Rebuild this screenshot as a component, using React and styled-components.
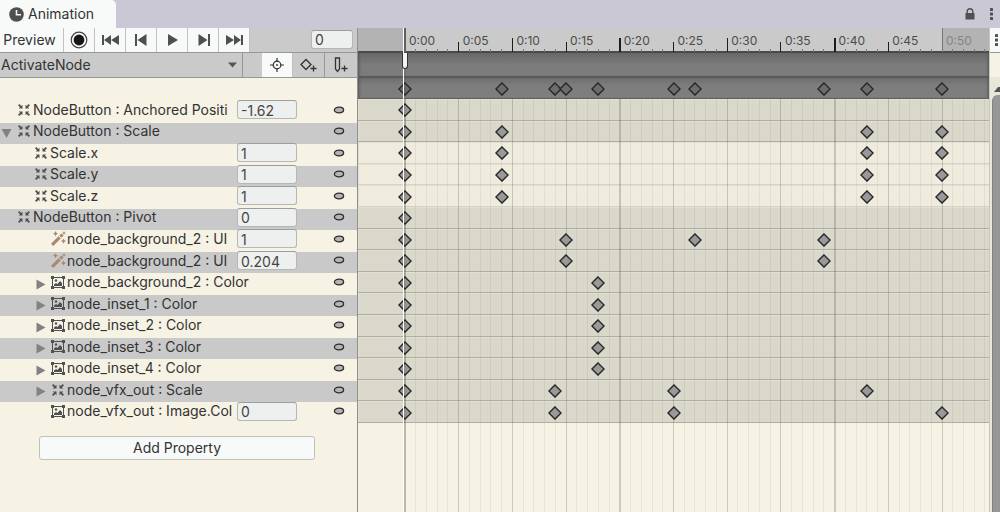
import styled, { createGlobalStyle, css } from "styled-components";

const LAST_FRAME = 50;

const rows = [
  { name: "NodeButton : Anchored Positi", icon: "rect", level: 0, value: "-1.62", keys: [0] },
  { name: "NodeButton : Scale", icon: "rect", level: 0, fold: "open", keys: [0, 9, 43, 50] },
  { name: "Scale.x", icon: "rect", level: 1, value: "1", keys: [0, 9, 43, 50] },
  { name: "Scale.y", icon: "rect", level: 1, value: "1", keys: [0, 9, 43, 50] },
  { name: "Scale.z", icon: "rect", level: 1, value: "1", keys: [0, 9, 43, 50] },
  { name: "NodeButton : Pivot", icon: "rect", level: 0, value: "0", keys: [0] },
  { name: "node_background_2 : UI", icon: "wand", level: 2, value: "1", keys: [0, 15, 27, 39] },
  { name: "node_background_2 : UI", icon: "wand", level: 2, value: "0.204", keys: [0, 15, 39] },
  { name: "node_background_2 : Color", icon: "image", level: 2, fold: "closed", keys: [0, 18] },
  { name: "node_inset_1 : Color", icon: "image", level: 2, fold: "closed", keys: [0, 18] },
  { name: "node_inset_2 : Color", icon: "image", level: 2, fold: "closed", keys: [0, 18] },
  { name: "node_inset_3 : Color", icon: "image", level: 2, fold: "closed", keys: [0, 18] },
  { name: "node_inset_4 : Color", icon: "image", level: 2, fold: "closed", keys: [0, 18] },
  { name: "node_vfx_out : Scale", icon: "rect", level: 2, fold: "closed", keys: [0, 14, 25, 43] },
  { name: "node_vfx_out : Image.Col", icon: "image", level: 2, value: "0", keys: [0, 14, 25, 50] },
];

const summaryKeys = [0, 9, 14, 15, 18, 25, 27, 39, 43, 50];
const ticks = Array.from({ length: 55 }, (_, i) => i);
const toPercent = (frame) => `${(frame / LAST_FRAME) * 100}%`;

const GlobalStyle = createGlobalStyle`
  * {
    box-sizing: border-box;
  }
  body {
    margin: 0;
    background: #f6f2e4;
    color: #333;
    font: 14px/20px Inter, sans-serif;
  }
  button, input, select {
    margin: 0;
    font: inherit;
    color: inherit;
  }
  button {
    border: 0;
    padding: 0;
    background: none;
  }
  svg {
    display: block;
    flex: none;
  }
`;

const Window = styled.main`
  display: flex;
  flex-direction: column;
  min-height: 100vh;
`;

const TabBar = styled.header`
  display: flex;
  align-items: center;
  height: 28px;
  padding-right: 7px;
  background: #cbc8d6;
`;

const Tab = styled.button`
  display: flex;
  align-items: center;
  gap: 4px;
  height: 28px;
  width: 116px;
  padding-left: 9px;
  background: #f8faf9;
  border-radius: 0 5px 0 0;
`;

const TabActions = styled.div`
  display: flex;
  gap: 15px;
  margin-left: auto;
`;

const Panels = styled.div`
  flex: 1;
  display: grid;
  grid-template-columns: 358px minmax(0, 1fr) 10px;
`;

const Hierarchy = styled.aside`
  border-right: 1px solid #8f8f8f;
`;

const Toolbar = styled.div`
  display: flex;
  align-items: stretch;
  height: 25px;
  background: #c9cac9;
  border-bottom: 1px solid #989898;
`;

const ToolButton = styled.button`
  display: flex;
  align-items: center;
  justify-content: center;
  width: ${(props) => props.$width || 31}px;
  background: ${(props) => (props.$plain ? "transparent" : "#f8faf9")};
  border-right: ${(props) => (props.$last ? "0" : `1px solid ${props.$plain ? "#989898" : "#c2c2c2"}`)};
`;

const PreviewButton = styled(ToolButton)`
  padding-right: 4px;
`;

const field = css`
  border: 1px solid #b5b6b6;
  border-top-color: #9c9d9d;
  border-radius: 3px;
  background: #eef0ef;
  color: #444;
`;

const FrameInput = styled.input`
  ${field}
  width: 42px;
  height: 19px;
  margin: 2px 4px 0 auto;
  padding: 0 3px;
`;

const ClipPicker = styled.div`
  display: flex;
  align-items: center;
  width: 243px;
  padding-right: 5px;
  border-right: 1px solid #989898;
`;

const ClipSelect = styled.select`
  flex: 1;
  height: 24px;
  padding: 0 1px;
  appearance: none;
  background: none;
  border: 0;
`;

const ToolGroup = styled.div`
  display: flex;
  flex: 1;
  justify-content: flex-end;
`;

const PropertyList = styled.ul`
  display: grid;
  grid-template-columns: minmax(0, 1fr);
  grid-template-rows: repeat(15, 1fr);
  height: 323px;
  margin: 23px 0 0;
  padding: 0;
  list-style: none;
`;

const PropertyRow = styled.li`
  display: flex;
  align-items: center;
  min-height: 0;
  padding: 0 0 4px ${(props) => 1 + props.$level * 17}px;

  &:nth-child(even) {
    background: #c9c9c9;
  }
`;

const Foldout = styled.button`
  display: flex;
  align-items: center;
  width: 16px;
  height: 12px;
  padding-top: 4px;
`;

const IconSlot = styled.span`
  width: 16px;
`;

const PropertyName = styled.label`
  flex: 1;
  min-width: 0;
  overflow: hidden;
  white-space: nowrap;
`;

const ValueInput = styled.input`
  ${field}
  flex: none;
  width: 60px;
  height: 19px;
  margin-left: 2px;
  padding: 2px 3px 0;
`;

const KeyMenu = styled.button`
  display: flex;
  align-items: center;
  justify-content: center;
  flex: none;
  width: 36px;
  height: 12px;
  margin-left: 24px;
`;

const AddProperty = styled.button`
  display: block;
  width: 276px;
  height: 24px;
  margin: 12px auto 0 39px;
  background: #f8faf9;
  border: 1px solid #bfbfbf;
  border-radius: 3px;
`;

const Timeline = styled.section`
  position: relative;
  display: flex;
  flex-direction: column;
  overflow: hidden;
  border-right: 1px solid #c9c7ba;
`;

const Track = styled.div`
  position: relative;
  height: 100%;
  margin: 0 47px;
`;

const Ruler = styled.div`
  height: 25px;
  background: #b3b3b3;
  border-bottom: 2px solid #4a4a4a;
`;

const RulerTrack = styled(Track)`
  background: #c9cac9;
`;

const TickLines = styled.svg`
  position: absolute;
  inset: 0;
  width: 100%;
  height: 100%;
  overflow: visible;
  shape-rendering: crispEdges;
`;

const TimeLabel = styled.span`
  position: absolute;
  top: 4px;
  margin-left: 4px;
  font-size: 12px;
  line-height: 18px;
  color: ${(props) => (props.$outside ? "#858585" : "#4c4c4c")};
`;

const EventLane = styled.div`
  height: 25px;
  background: linear-gradient(#686868, #7c7c7c 12px);
  border-bottom: 2px solid #5a5a5a;
  box-shadow: inset 3px 0 3px -2px #555, inset -3px 0 3px -2px #555;
`;

const SummaryLane = styled.div`
  height: 21px;
  padding-top: 1px;
  background: linear-gradient(#6e6e6e, #7e7e7e 8px);
  border-bottom: 1px solid #5f5f5f;
  box-shadow: inset 3px 0 3px -2px #555, inset -3px 0 3px -2px #555;
`;

const DopeSheet = styled.div`
  position: relative;
  flex: 1;
`;

const Lanes = styled.div`
  display: grid;
  grid-template-rows: repeat(15, 1fr);
  height: 324px;
`;

const Lane = styled.div`
  min-height: 0;
  padding-top: 2px;
  background: ${(props) => (props.$child ? "#efebdd" : "#dad8ca")};
  border-bottom: 1px solid ${(props) => (props.$child ? "#d6d3c6" : "#b0aea3")};
  box-shadow: inset 1px 1px #e3e0d3;
`;

const GridLayer = styled.div`
  position: absolute;
  inset: 0;
  pointer-events: none;
`;

const Keyframe = styled.button`
  position: absolute;
  top: 50%;
  width: 14px;
  height: 14px;
  transform: translate(-50%, -50%);
  z-index: 1;
`;

const Playhead = styled.div`
  position: absolute;
  z-index: 2;
  top: 0;
  bottom: 0;
  left: 45px;
  width: 3px;
  border-left: 1px solid #fffef8;
  background: rgba(60, 60, 50, 0.12);
  pointer-events: none;
`;

const PlayheadHandle = styled.div`
  position: absolute;
  top: 25px;
  left: -2px;
  width: 6px;
  height: 16px;
  background: #f4f4f2;
  border: 1px solid #333;
  border-top: 0;
  border-radius: 0 0 3px 3px;
`;

const ScrollColumn = styled.div`
  display: flex;
  flex-direction: column;
  overflow: hidden;
  background: #e9e6da;
`;

const ScrollMenu = styled.button`
  display: flex;
  align-items: center;
  justify-content: flex-end;
  height: 25px;
  padding-right: 2px;
  background: #f8faf9;
  border-bottom: 1px solid #989898;
`;

const ScrollGap = styled.div`
  height: 24px;
  background: #f6f2e4;
`;

const ScrollUp = styled.button`
  height: 18px;
  padding: 7px 0 0 4px;
`;

const ScrollThumb = styled.div`
  flex: 1;
  margin-left: 2px;
  background: #979797;
  border-left: 1px solid #828282;
  border-radius: 6px 0 0 0;
`;

const ClockIcon = () => (
  <svg width="15" height="15" viewBox="0 0 15 15">
    <circle cx="7.5" cy="7.5" r="7.3" fill="#4f4f4f" />
    <path d="M7.5 3v4.7H12" fill="none" stroke="#f8faf9" strokeWidth="1.6" />
  </svg>
);

const LockIcon = () => (
  <svg width="10" height="12" viewBox="0 0 10 12">
    <path d="M2.2 6V3.6a2.8 2.8 0 0 1 5.6 0V6" fill="none" stroke="#505050" strokeWidth="1.4" />
    <rect x="0.5" y="5" width="9" height="6.5" fill="#505050" />
  </svg>
);

const KebabIcon = () => (
  <svg width="3" height="12" viewBox="0 0 3 12" fill="#505050">
    <rect width="3" height="3" rx="0.6" />
    <rect y="4.5" width="3" height="3" rx="0.6" />
    <rect y="9" width="3" height="3" rx="0.6" />
  </svg>
);

const RecordIcon = () => (
  <svg width="18" height="18" viewBox="0 0 18 18">
    <circle cx="9" cy="9" r="7.8" fill="none" stroke="#444" strokeWidth="1.2" />
    <circle cx="9" cy="9" r="5.4" fill="#161616" />
  </svg>
);

const transportPaths = {
  first: "M0 1h2v10H0zM2 6l7-5v10zM9 6l8-5v10z",
  previous: "M2 0h2v12H2zM4.500 6l9-6v12z",
  play: "M4 0l10 6-10 6z",
  next: "M3.500 0l9 6-9 6zM13 0h2v12h-2z",
  last: "M0 1l8 5-8 5zM8 1l7 5-7 5zM15 1h2v10h-2z",
};

const TransportIcon = ({ type }) => (
  <svg width="17" height="12" viewBox="0 0 17 12">
    <path d={transportPaths[type]} fill="#4f4f4f" />
  </svg>
);

const CaretIcon = () => (
  <svg width="9" height="6" viewBox="0 0 9 6">
    <path d="M0 0.500h9l-4.500 5z" fill="#555" />
  </svg>
);

const TargetIcon = () => (
  <svg width="14" height="14" viewBox="0 0 14 14" fill="none" stroke="#333" strokeWidth="1.2">
    <circle cx="7" cy="7" r="3.8" />
    <path d="M7 0v4M7 10v4M0 7h4M10 7h4" />
    <circle cx="7" cy="7" r="0.9" fill="#333" stroke="none" />
  </svg>
);

const AddKeyIcon = () => (
  <svg width="17" height="15" viewBox="0 0 17 15" fill="none" stroke="#333" strokeWidth="1.3">
    <path d="M6 1.500l5 5-5 5-5-5z" />
    <path d="M13.500 7.500v6M10.500 10.500h6" />
  </svg>
);

const AddEventIcon = () => (
  <svg width="14" height="16" viewBox="0 0 14 16" fill="none" stroke="#333" strokeWidth="1.3">
    <path d="M1.500 1h4v11l-2 2.500-2-2.500z" />
    <path d="M10.500 8.500v6M7.500 11.500h6" />
  </svg>
);

const FoldoutIcon = ({ open }) => (
  <svg width="11" height="11" viewBox="0 0 11 11">
    <path d={open ? "M0.500 1h10l-5 9z" : "M1.500 0.500l9 5-9 5z"} fill="#828282" />
  </svg>
);

// four arrowheads pointing at the middle
const RectIcon = () => (
  <svg width="14" height="14" viewBox="0 0 14 14" fill="#4f4f4f">
    <path d="M5.500 5.500H1.800L3 4.200 1 2.300 2.300 1l1.900 2 1.300-1.200z" />
    <path d="M8.500 5.500h3.700L11 4.200l2-1.900L11.700 1l-1.900 2-1.300-1.200z" />
    <path d="M5.500 8.500H1.800L3 9.800l-2 1.900L2.300 13l1.900-2 1.300 1.200z" />
    <path d="M8.500 8.500h3.700L11 9.800l2 1.900-1.300 1.300-1.900-2-1.300 1.200z" />
  </svg>
);

const WandIcon = () => (
  <svg width="15" height="15" viewBox="0 0 15 15" fill="#a8896c">
    <path d="M0 12.800l7.500-7.500 2.200 2.200L2.200 15zM8.200 4.600l2.200-2.200 2.200 2.200-2.200 2.200z" />
    <path d="M4.500 0l.9 1.700 1.700.9-1.700.9-.9 1.700-.9-1.700-1.700-.9 1.700-.9zM13 0l.7 1.400 1.300.6-1.300.6L13 4l-.7-1.400L11 2l1.300-.6zM12.500 7.500l.9 1.800 1.600.8-1.600.8-.9 1.800-.9-1.800-1.600-.8 1.600-.8z" />
  </svg>
);

const ImageIcon = () => (
  <svg width="14" height="13" viewBox="0 0 14 13" fill="#505050">
    <path d="M1.500 1.500h11v10h-11z" fill="none" stroke="#505050" />
    <path d="M0 0h3v3H0zM11 0h3v3h-3zM0 10h3v3H0zM11 10h3v3h-3z" />
    <path d="M3 10V8.500l2-1.500 1.500 1 2.500-3 2 2V10z" />
    <circle cx="5" cy="4.500" r="1.200" />
  </svg>
);

const icons = { rect: RectIcon, wand: WandIcon, image: ImageIcon };

const KeyMenuIcon = () => (
  <svg width="12" height="8" viewBox="0 0 12 8">
    <ellipse cx="6" cy="4" rx="4.600" ry="2.800" fill="#b4b4b4" stroke="#2e2e2e" strokeWidth="1.3" />
  </svg>
);

function Keys({ frames, fill, label }) {
  return (
    <Track>
      {frames.map((frame) => (
        <Keyframe key={frame} aria-label={`${label}, frame ${frame}`} style={{ left: toPercent(frame) }}>
          <svg width="14" height="14" viewBox="0 0 14 14">
            <path d="M7 0.900L13.100 7 7 13.100 0.900 7z" fill={fill} stroke="#262626" strokeWidth="1.4" />
          </svg>
        </Keyframe>
      ))}
    </Track>
  );
}

function Property({ row, index }) {
  const Icon = icons[row.icon];
  const id = `property-${index}`;
  return (
    <PropertyRow $level={row.level}>
      {row.fold ? (
        <Foldout aria-label={`Toggle ${row.name}`} aria-expanded={row.fold === "open"}>
          <FoldoutIcon open={row.fold === "open"} />
        </Foldout>
      ) : (
        <Foldout as="span" />
      )}
      <IconSlot>
        <Icon />
      </IconSlot>
      <PropertyName as={row.value ? "label" : "span"} htmlFor={row.value ? id : undefined}>
        {row.name}
      </PropertyName>
      {row.value && <ValueInput id={id} defaultValue={row.value} />}
      <KeyMenu aria-label={`${row.name} key options`}>
        <KeyMenuIcon />
      </KeyMenu>
    </PropertyRow>
  );
}

function rulerLine(frame) {
  if (frame === 0) return { y1: 0, stroke: "#666" };
  if (frame === LAST_FRAME) return { y1: 0, stroke: "#777" };
  if (frame % 10 === 0) return { y1: 10, stroke: "#1c1c1c" };
  if (frame % 5 === 0) return { y1: 14, stroke: "#1c1c1c" };
  return { y1: 21, stroke: "#777" };
}

export default function App() {
  return (
    <Window>
      <GlobalStyle />
      <TabBar>
        <Tab>
          <ClockIcon />
          Animation
        </Tab>
        <TabActions>
          <button aria-label="Lock">
            <LockIcon />
          </button>
          <button aria-label="Window menu">
            <KebabIcon />
          </button>
        </TabActions>
      </TabBar>
      <Panels>
        <Hierarchy>
          <Toolbar>
            <PreviewButton $width={64}>Preview</PreviewButton>
            <ToolButton aria-label="Record">
              <RecordIcon />
            </ToolButton>
            {Object.keys(transportPaths).map((type) => (
              <ToolButton key={type} aria-label={type}>
                <TransportIcon type={type} />
              </ToolButton>
            ))}
            <FrameInput aria-label="Frame" defaultValue="0" />
          </Toolbar>
          <Toolbar>
            <ClipPicker>
              <ClipSelect aria-label="Clip">
                <option>ActivateNode</option>
              </ClipSelect>
              <CaretIcon />
            </ClipPicker>
            <ToolGroup>
              <ToolButton aria-label="Filter by selection">
                <TargetIcon />
              </ToolButton>
              <ToolButton $plain $width={32} aria-label="Add keyframe">
                <AddKeyIcon />
              </ToolButton>
              <ToolButton $plain $last $width={32} aria-label="Add event">
                <AddEventIcon />
              </ToolButton>
            </ToolGroup>
          </Toolbar>
          <PropertyList>
            {rows.map((row, index) => (
              <Property key={index} row={row} index={index} />
            ))}
          </PropertyList>
          <AddProperty>Add Property</AddProperty>
        </Hierarchy>
        <Timeline>
          <Ruler>
            <RulerTrack>
              <TickLines>
                {ticks.map((frame) => (
                  <line
                    key={frame}
                    x1={toPercent(frame)}
                    x2={toPercent(frame)}
                    y2="24"
                    strokeWidth={frame % 20 === 0 ? 2 : 1}
                    {...rulerLine(frame)}
                  />
                ))}
              </TickLines>
              {ticks
                .filter((frame) => frame % 5 === 0)
                .map((frame) => (
                  <TimeLabel key={frame} $outside={frame >= LAST_FRAME} style={{ left: toPercent(frame) }}>
                    0:{String(frame).padStart(2, "0")}
                  </TimeLabel>
                ))}
            </RulerTrack>
          </Ruler>
          <EventLane />
          <SummaryLane>
            <Keys frames={summaryKeys} fill="#6c6c6c" label="Summary" />
          </SummaryLane>
          <DopeSheet>
            <GridLayer>
              <Track>
                <TickLines>
                  {ticks.map((frame) => (
                    <line
                      key={frame}
                      x1={toPercent(frame)}
                      x2={toPercent(frame)}
                      y1="0"
                      y2="100%"
                      stroke="#3c3c32"
                      strokeOpacity={frame % 5 === 0 ? 0.22 : 0.07}
                      strokeWidth={frame % 20 === 0 ? 2 : 1}
                    />
                  ))}
                </TickLines>
              </Track>
            </GridLayer>
            <Lanes>
              {rows.map((row, index) => (
                <Lane key={index} $child={row.level === 1}>
                  <Keys frames={row.keys} fill="#999" label={row.name} />
                </Lane>
              ))}
            </Lanes>
          </DopeSheet>
          <Playhead>
            <PlayheadHandle />
          </Playhead>
        </Timeline>
        <ScrollColumn>
          <ScrollMenu aria-label="Timeline menu">
            <KebabIcon />
          </ScrollMenu>
          <ScrollGap />
          <ScrollUp aria-label="Scroll up">
            <svg width="6" height="5" viewBox="0 0 6 5">
              <path d="M0 5l4-5h2v5z" fill="#555" />
            </svg>
          </ScrollUp>
          <ScrollThumb />
        </ScrollColumn>
      </Panels>
    </Window>
  );
}
